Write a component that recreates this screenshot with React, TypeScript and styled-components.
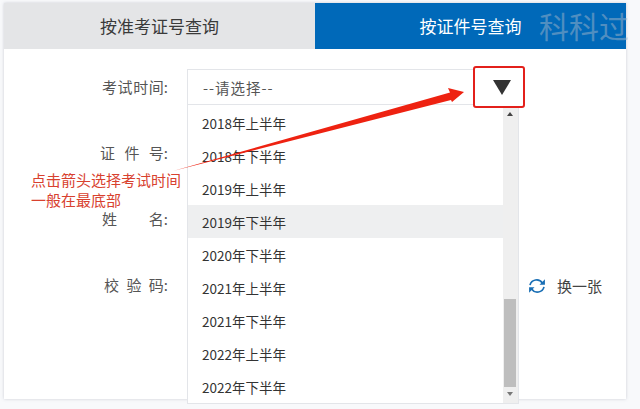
import React from 'react';
import styled, { createGlobalStyle } from 'styled-components';

const GlobalStyle = createGlobalStyle`
  html, body {
    margin: 0;
    padding: 0;
    height: 100%;
    overflow: hidden;
    background: #f8f9fb;
    font-family: 'Noto Sans CJK SC', 'Noto Sans', sans-serif;
  }
`;

const Page = styled.div`
  position: relative;
  width: 640px;
  height: 409px;
  padding: 3px 14px 10px 4px;
  box-sizing: border-box;
`;

const Card = styled.div`
  height: 100%;
  background: #fff;
  box-shadow: 0 0 3px rgba(120, 130, 150, 0.35);
`;

const Tabs = styled.div`
  display: grid;
  grid-template-columns: 311px 311px;
  height: 46px;
`;

const Tab = styled.div<{ $active?: boolean }>`
  display: flex;
  align-items: center;
  justify-content: center;
  padding-bottom: 2px;
  box-sizing: border-box;
  font-size: 17px;
  background: ${(p) => (p.$active ? '#0069b9' : '#e4e5e7')};
  color: ${(p) => (p.$active ? '#fff' : '#3a3a3a')};
`;

const Watermark = styled.div`
  position: absolute;
  left: 539px;
  top: 3px;
  font-size: 30px;
  line-height: 44px;
  color: rgba(160, 180, 200, 0.5);
`;

const Form = styled.div`
  display: flex;
  flex-direction: column;
  padding-top: 20px;
`;

const Row = styled.div`
  display: flex;
  align-items: center;
  height: 36px;
  margin-bottom: 30.2px;
`;

const LabelCell = styled.div`
  width: 164px;
  flex: none;
  display: flex;
  justify-content: flex-end;
  padding-bottom: 2px;
  box-sizing: border-box;
`;

const LabelText = styled.div<{ $width: number }>`
  width: ${(p) => p.$width}px;
  display: flex;
  justify-content: space-between;
  font-size: 15px;
  color: #555;
  white-space: nowrap;
`;

const Select = styled.div`
  position: relative;
  width: 332px;
  height: 36px;
  margin-left: 19px;
  box-sizing: border-box;
  border: 1px solid #e3e5e9;
  padding-left: 15px;
  display: flex;
  align-items: center;
  font-size: 14.5px;
  letter-spacing: 1px;
  color: #555;
  background: #fff;
`;

const CaretBox = styled.div`
  position: absolute;
  left: 285px;
  top: -4px;
  width: 52px;
  height: 42px;
  box-sizing: border-box;
  border: 2.5px solid #e3201b;
  border-radius: 3px;
  padding-left: 5px;
  background: #fff;
  display: flex;
  align-items: center;
  justify-content: center;
  z-index: 3;
`;

const Caret = styled.div`
  width: 0;
  height: 0;
  border-left: 9px solid transparent;
  border-right: 9px solid transparent;
  border-top: 15px solid #333;
`;

const Dropdown = styled.div`
  position: absolute;
  left: -1px;
  top: 35px;
  width: 332px;
  height: 299px;
  box-sizing: border-box;
  display: flex;
  background: #fff;
  border: 1px solid #e3e5e9;
  border-top: none;
  z-index: 2;
  letter-spacing: 0;
`;

const Options = styled.div`
  flex: 1;
  display: flex;
  flex-direction: column;
  padding-top: 1px;
`;

const Option = styled.div<{ $hover?: boolean }>`
  height: 33px;
  flex: none;
  display: flex;
  align-items: center;
  padding-left: 14px;
  font-size: 13.5px;
  color: #333;
  background: ${(p) => (p.$hover ? '#eeeff0' : 'transparent')};
`;

const Scrollbar = styled.div`
  position: relative;
  width: 15px;
  background: #efefef;
`;

const ScrollArrow = styled.div<{ $down?: boolean }>`
  position: absolute;
  left: 4px;
  width: 0;
  height: 0;
  border-left: 3px solid transparent;
  border-right: 3px solid transparent;
  ${(p) =>
    p.$down
      ? 'bottom: 7px; border-top: 4px solid #777;'
      : 'top: 7px; border-bottom: 4px solid #444;'}
`;

const ScrollThumb = styled.div`
  position: absolute;
  left: 1px;
  top: 194px;
  width: 12px;
  height: 88px;
  background: #bebebe;
`;

const Refresh = styled.div`
  display: flex;
  align-items: center;
  gap: 10px;
  margin-left: 359px;
  font-size: 15px;
  color: #444;
`;

const RefreshIcon = styled.svg`
  flex: none;
  color: #1a6fb5;
`;

const Annotation = styled.div`
  position: absolute;
  left: 31px;
  top: 170px;
  font-size: 15px;
  line-height: 20px;
  color: #d8412f;
  z-index: 4;
`;

const ArrowLayer = styled.svg`
  position: absolute;
  left: 0;
  top: 0;
  z-index: 5;
  pointer-events: none;
`;

const options = [
  '2018年上半年',
  '2018年下半年',
  '2019年上半年',
  '2019年下半年',
  '2020年下半年',
  '2021年上半年',
  '2021年下半年',
  '2022年上半年',
  '2022年下半年',
];

const FieldLabel: React.FC<{ chars: string[]; width: number }> = ({ chars, width }) => (
  <LabelCell>
    <LabelText $width={width}>
      {chars.map((c) => (
        <span key={c}>{c}</span>
      ))}
    </LabelText>
  </LabelCell>
);

const App: React.FC = () => {
  return (
    <Page>
      <GlobalStyle />
      <Card>
        <Tabs>
          <Tab>按准考证号查询</Tab>
          <Tab $active>按证件号查询</Tab>
        </Tabs>
        <Form>
          <Row>
            <FieldLabel chars={['考', '试', '时', '间:']} width={66} />
            <Select>
              --请选择--
              <CaretBox>
                <Caret />
              </CaretBox>
              <Dropdown>
                <Options>
                  {options.map((item, index) => (
                    <Option key={item} $hover={index === 3}>
                      {item}
                    </Option>
                  ))}
                </Options>
                <Scrollbar>
                  <ScrollArrow />
                  <ScrollThumb />
                  <ScrollArrow $down />
                </Scrollbar>
              </Dropdown>
            </Select>
          </Row>
          <Row>
            <FieldLabel chars={['证', '件', '号:']} width={68} />
          </Row>
          <Row>
            <FieldLabel chars={['姓', '名:']} width={66} />
          </Row>
          <Row>
            <FieldLabel chars={['校', '验', '码:']} width={64} />
            <Refresh>
              <RefreshIcon width="20" height="20" viewBox="0 0 24 24" fill="none">
                <path
                  d="M18.5 8.5A8.2 8.2 0 0 0 3.6 11M5.5 15.5A8.2 8.2 0 0 0 20.4 13"
                  stroke="currentColor"
                  strokeWidth="2"
                />
                <path d="M21.5 4v6.5H15zM2.5 20v-6.5H9z" fill="currentColor" />
              </RefreshIcon>
              换一张
            </Refresh>
          </Row>
        </Form>
      </Card>
      <Watermark>科科过</Watermark>
      <Annotation>
        点击箭头选择考试时间
        <br />
        一般在最底部
      </Annotation>
      <ArrowLayer width="640" height="409" viewBox="0 0 640 409">
        <polygon points="173,171 450,92.5 448,88 464,92 452,102 451,100" fill="#ee2211" />
      </ArrowLayer>
    </Page>
  );
};

export default App;
